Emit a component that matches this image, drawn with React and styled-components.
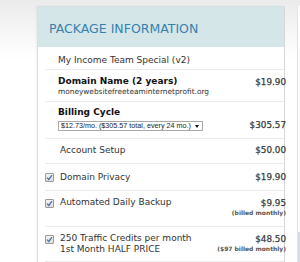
import React from 'react';
import styled, { createGlobalStyle } from 'styled-components';

const Global = createGlobalStyle`
  html, body { margin: 0; padding: 0; }
  body {
    width: 300px;
    height: 262px;
    overflow: hidden;
    background: linear-gradient(#ebebeb 0px, #f5f5f5 28px, #ffffff 60px);
    font-family: "DejaVu Sans", Verdana, sans-serif;
  }
`;

const Page = styled.div`
  display: flex;
  align-items: flex-start;
  gap: 12px;
  height: 262px;
  box-sizing: border-box;
  padding: 6px 0 0 37px;
`;

const Panel = styled.section`
  flex: none;
  width: 248px;
  box-sizing: border-box;
  background: #fff;
  border: 1px solid #dddddd;
  border-right-color: #d6d6d6;
  border-top-color: #d2e0e3;
  border-bottom: none;
  box-shadow: -1px 0 2px rgba(0, 0, 0, 0.05);
  min-height: 256px;
`;

const Header = styled.h2`
  margin: 0;
  height: 40px;
  box-sizing: border-box;
  display: flex;
  align-items: center;
  padding: 2px 0 0 11px;
  background: #d5e6e9;
  color: #3581ad;
  font-size: 12.5px;
  font-weight: normal;
  letter-spacing: 0;
  white-space: nowrap;
`;

const List = styled.div`
  margin-left: 7px;
`;

const Row = styled.div`
  display: grid;
  grid-template-columns: 15px 1fr auto;
  align-items: start;
  padding: ${p => p.$pt}px 0 ${p => p.$pb}px;
  border-bottom: 1px solid #ebebeb;
`;

const Check = styled.span`
  width: 9px;
  height: 9px;
  margin-top: ${p => p.$mt ?? 1}px;
  box-sizing: border-box;
  border: 1px solid #9a9a9a;
  border-radius: 1px;
  background: linear-gradient(#f4f4f4, #dedede);
  display: flex;
  align-items: center;
  justify-content: center;
  svg { display: block; }
`;

const Body = styled.div`
  margin-left: ${p => (p.$shift ? -2 : 0)}px;
  min-width: 0;
`;

const Label = styled.div`
  font-size: 9px;
  line-height: 11px;
  color: ${p => (p.$bold ? '#111' : '#333')};
  font-weight: ${p => (p.$bold ? 'bold' : 'normal')};
  white-space: nowrap;
`;

const Sub = styled.div`
  font-size: 7.4px;
  line-height: 9px;
  color: #333;
  white-space: nowrap;
`;

const Select = styled.div`
  margin-top: 3px;
  width: 145px;
  height: 10px;
  box-sizing: border-box;
  border: 1px solid #a9a9a9;
  background: #fff;
  display: flex;
  align-items: center;
  justify-content: space-between;
  padding: 0 2px 0 2px;
  font-family: "Liberation Sans", Arial, sans-serif;
  font-size: 7.2px;
  line-height: 8px;
  color: #222;
  white-space: nowrap;
`;

const Caret = styled.span`
  width: 0;
  height: 0;
  border-left: 2.5px solid transparent;
  border-right: 2.5px solid transparent;
  border-top: 3px solid #111;
  margin-right: 1px;
`;

const PriceCol = styled.div`
  margin-top: ${p => p.$mt ?? 0}px;
  margin-right: -2px;
  text-align: right;
  display: flex;
  flex-direction: column;
  align-items: flex-end;
`;

const Price = styled.div`
  font-size: 8.8px;
  line-height: 11px;
  font-weight: normal;
  color: #333;
  white-space: nowrap;
  -webkit-text-stroke: 0.25px #444;
`;

const Note = styled.div`
  font-size: 6px;
  line-height: 8px;
  font-weight: bold;
  color: #555;
  white-space: nowrap;
`;

const Side = styled.aside`
  flex: 1;
  align-self: stretch;
  display: flex;
  flex-direction: column;
  justify-content: flex-end;
  background: #fff;
  border-left: 1px solid #e2e2e2;
`;

const SideHead = styled.div`
  height: 30px;
  background: #d3dde1;
`;

const Tick = () => (
  <svg width="7" height="7" viewBox="0 0 7 7">
    <path d="M1 3.6 L2.8 5.4 L6 1.2" fill="none" stroke="#4d6fa6" strokeWidth="1.3" />
  </svg>
);

export default function App() {
  return (
    <>
      <Global />
      <Page>
        <Panel>
          <Header>PACKAGE INFORMATION</Header>
          <List>
            <Row $pt={8} $pb={3}>
              <span />
              <Body $shift>
                <Label>My Income Team Special (v2)</Label>
              </Body>
            </Row>
            <Row $pt={6} $pb={5}>
              <span />
              <Body $shift>
                <Label $bold>Domain Name (2 years)</Label>
                <Sub>moneywebsitefreeteaminternetprofit.org</Sub>
              </Body>
              <PriceCol $mt={1}>
                <Price>$19.90</Price>
              </PriceCol>
            </Row>
            <Row $pt={5} $pb={7}>
              <span />
              <Body $shift>
                <Label $bold>Billing Cycle</Label>
                <Select>
                  <span>$12.73/mo. ($305.57 total, every 24 mo.)</span>
                  <Caret />
                </Select>
              </Body>
              <PriceCol $mt={13}>
                <Price>$305.57</Price>
              </PriceCol>
            </Row>
            <Row $pt={6} $pb={7}>
              <span />
              <Body>
                <Label>Account Setup</Label>
              </Body>
              <PriceCol>
                <Price>$50.00</Price>
              </PriceCol>
            </Row>
            <Row $pt={8} $pb={7}>
              <Check $mt={1}><Tick /></Check>
              <Body>
                <Label>Domain Privacy</Label>
              </Body>
              <PriceCol>
                <Price>$19.90</Price>
              </PriceCol>
            </Row>
            <Row $pt={6} $pb={9}>
              <Check $mt={2}><Tick /></Check>
              <Body>
                <Label>Automated Daily Backup</Label>
              </Body>
              <PriceCol $mt={1}>
                <Price>$9.95</Price>
                <Note>(billed monthly)</Note>
              </PriceCol>
            </Row>
            <Row $pt={6} $pb={6}>
              <Check $mt={2}><Tick /></Check>
              <Body>
                <Label>250 Traffic Credits per month</Label>
                <Label>1st Month HALF PRICE</Label>
              </Body>
              <PriceCol $mt={1}>
                <Price>$48.50</Price>
                <Note>($97 billed monthly)</Note>
              </PriceCol>
            </Row>
          </List>
        </Panel>
        <Side>
          <SideHead />
        </Side>
      </Page>
    </>
  );
}
